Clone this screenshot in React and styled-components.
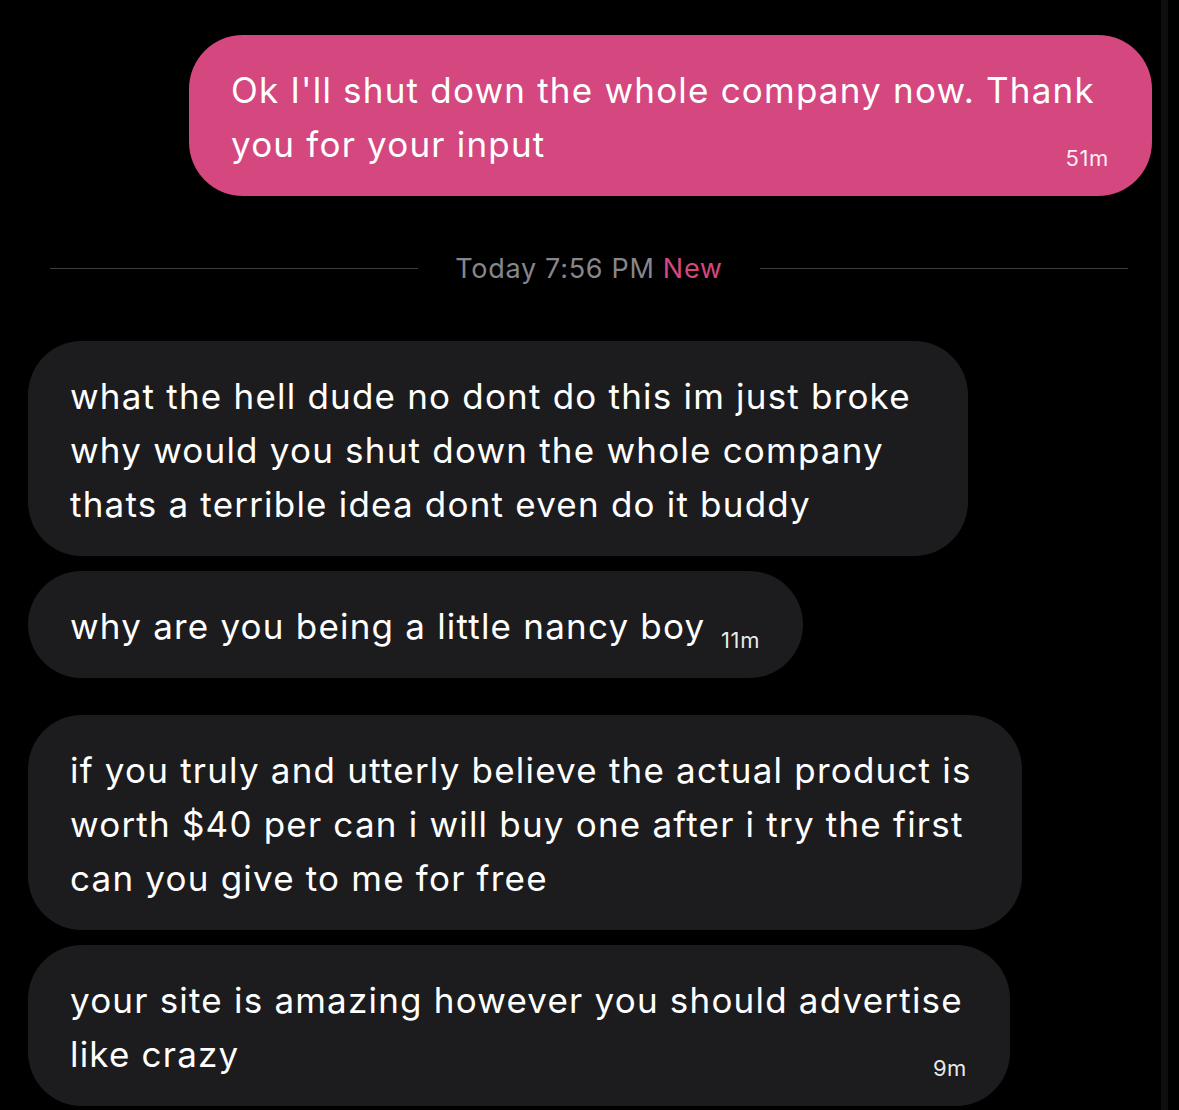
import styled, { createGlobalStyle } from "styled-components";

const GlobalStyle = createGlobalStyle`
  html, body {
    margin: 0;
    padding: 0;
    background: #000;
  }
  body {
    font-family: Inter, "Noto Sans", "Liberation Sans", sans-serif;
    -webkit-font-smoothing: antialiased;
  }
`;

const messages = [
  {
    id: 1,
    lines: ["what the hell dude no dont do this im just broke", "why would you shut down the whole company", "thats a terrible idea dont even do it buddy"],
    width: 940,
  },
  {
    id: 2,
    lines: ["why are you being a little nancy boy"],
    width: 775,
    time: "11m",
  },
  {
    id: 3,
    lines: ["if you truly and utterly believe the actual product is", "worth $40 per can i will buy one after i try the first", "can you give to me for free"],
    width: 994,
    groupStart: true,
  },
  {
    id: 4,
    lines: ["your site is amazing however you should advertise", "like crazy"],
    width: 982,
    time: "9m",
  },
];

export default function App() {
  return (
    <>
      <GlobalStyle />
      <Page>
        <Thread>
          <Bubble $mine $width={963}>
            <Line>Ok I'll shut down the whole company now. Thank</Line>
            <LastLine>
              <span>you for your input</span>
              <Time>51m</Time>
            </LastLine>
          </Bubble>

          <Divider>
            <Rule />
            <DividerText>
              Today 7:56 PM <NewTag>New</NewTag>
            </DividerText>
            <Rule />
          </Divider>

          {messages.map((msg) => {
            const last = msg.lines[msg.lines.length - 1];
            return (
              <Bubble key={msg.id} $width={msg.width} $groupStart={msg.groupStart}>
                {msg.lines.slice(0, -1).map((l, i) => (
                  <Line key={i}>{l}</Line>
                ))}
                <LastLine>
                  <span>{last}</span>
                  {msg.time && <Time>{msg.time}</Time>}
                </LastLine>
              </Bubble>
            );
          })}
        </Thread>
        <ScrollTrack />
      </Page>
    </>
  );
}

const Page = styled.div`
  display: flex;
  width: 1179px;
  height: 1110px;
  overflow: hidden;
  background: #000;
`;

const Thread = styled.div`
  flex: 1;
  display: flex;
  flex-direction: column;
  align-items: flex-start;
  padding: 35px 9px 0 28px;
`;

const ScrollTrack = styled.div`
  width: 7px;
  margin-right: 11px;
  background: #0e0e0e;
`;

const Bubble = styled.div`
  box-sizing: border-box;
  width: ${(p) => p.$width}px;
  align-self: ${(p) => (p.$mine ? "flex-end" : "flex-start")};
  margin-top: ${(p) => (p.$groupStart ? "22px" : "0")};
  margin-bottom: 15px;
  padding: 28px 43px 25px 42px;
  border-radius: 54px;
  background: ${(p) => (p.$mine ? "#d4477f" : "#1c1c1e")};
  color: #fff;
  font-size: 35px;
  line-height: 54px;
  letter-spacing: 1.2px;
`;

const Line = styled.div`
  white-space: nowrap;
`;

const LastLine = styled.div`
  display: flex;
  justify-content: space-between;
  align-items: baseline;
  height: 54px;
  white-space: nowrap;
`;

const Time = styled.span`
  font-size: 22px;
  line-height: 1;
  letter-spacing: 0.6px;
  position: relative;
  top: 9px;
  color: rgba(255, 255, 255, 0.92);
`;

const Divider = styled.div`
  display: flex;
  align-items: center;
  align-self: stretch;
  height: 30px;
  margin: 42px 24px 58px 22px;
`;

const Rule = styled.div`
  flex: 1;
  height: 1px;
  background: #3d3d40;
`;

const DividerText = styled.div`
  padding: 0 37px;
  font-size: 27px;
  color: #86868b;
  letter-spacing: 0.7px;
  white-space: nowrap;
`;

const NewTag = styled.span`
  color: #d4477f;
`;
